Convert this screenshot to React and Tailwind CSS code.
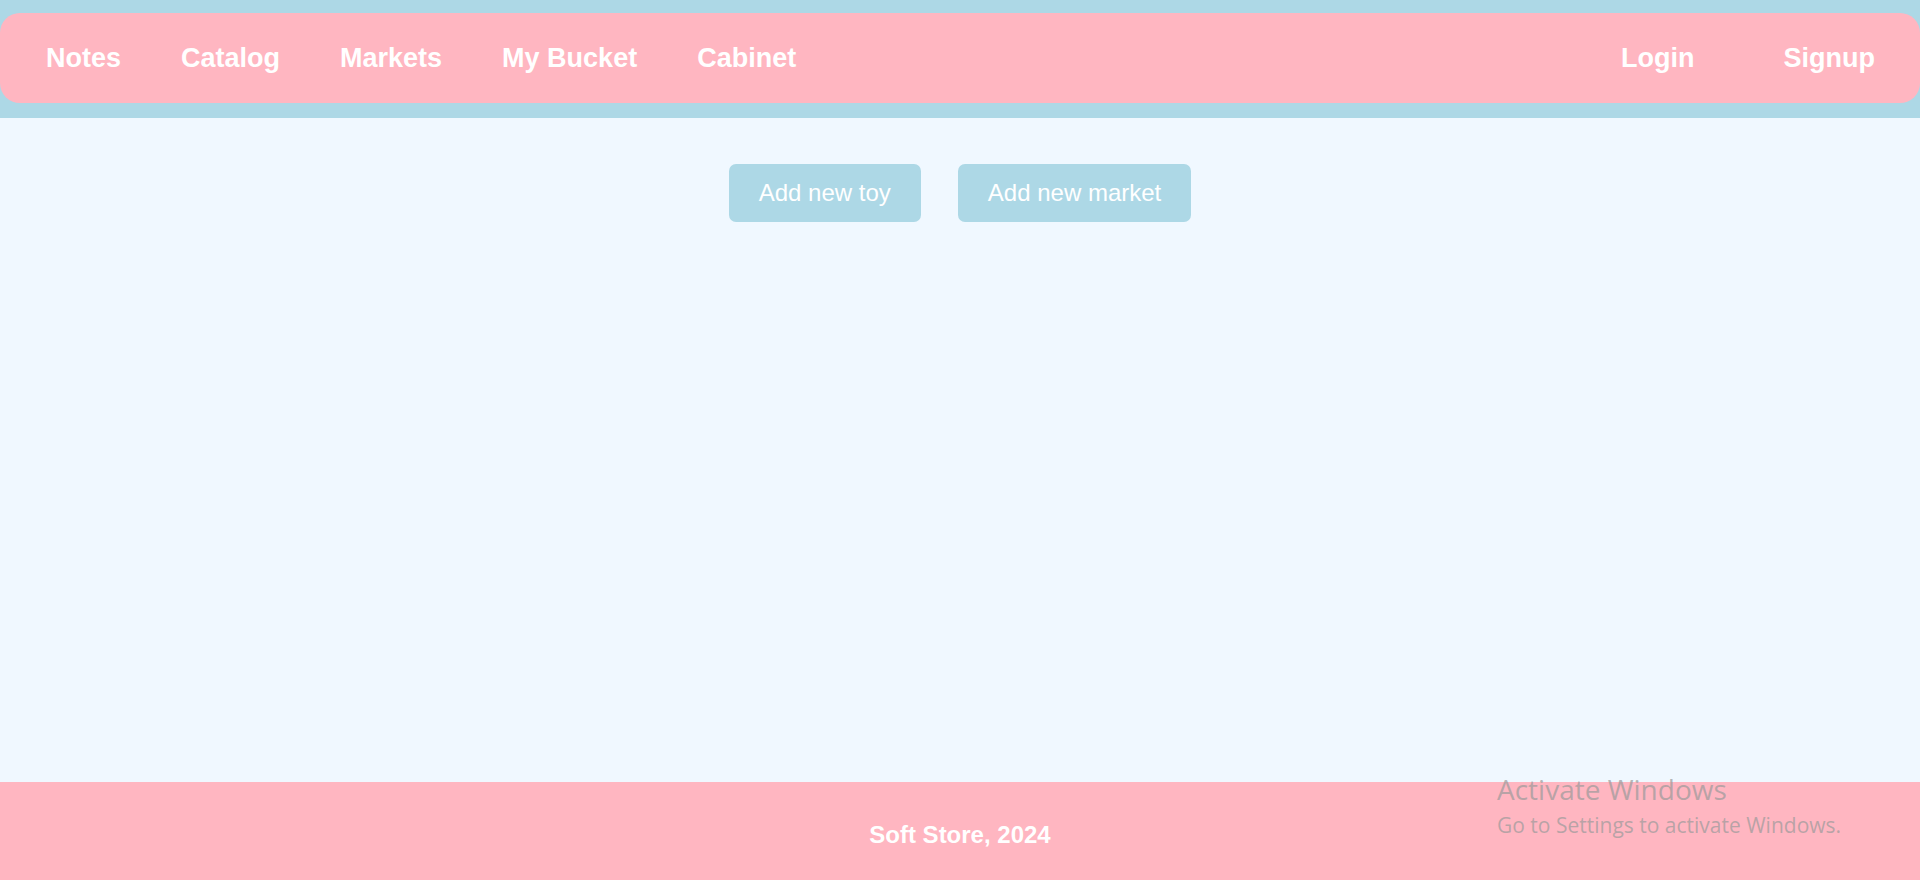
import React from 'react';

const leftLinks = ['Notes', 'Catalog', 'Markets', 'My Bucket', 'Cabinet'];
const rightLinks = ['Login', 'Signup'];

const App = () => {
  return (
    <div className="h-screen flex flex-col bg-[#F0F8FF] font-['Liberation_Sans',Arial,sans-serif] relative">
      <header className="bg-[#ADD8E6] pt-[13px] pb-[15px]">
        <nav className="bg-[#FFB6C1] rounded-[20px] h-[90px] flex items-center justify-between pl-[46px] pr-[45px]">
          <div className="flex items-center gap-[60px]">
            {leftLinks.map((l) => (
              <a key={l} className="text-white font-bold text-[27px] leading-none cursor-pointer">{l}</a>
            ))}
          </div>
          <div className="flex items-center gap-[89px]">
            {rightLinks.map((l) => (
              <a key={l} className="text-white font-bold text-[27px] leading-none cursor-pointer">{l}</a>
            ))}
          </div>
        </nav>
      </header>

      <main className="flex-1">
        <div className="flex justify-center gap-[37px] pt-[46px]">
          <button className="h-[58px] px-[30px] rounded-[7px] bg-[#ADD8E6] text-white text-[24px] flex items-center">
            Add new toy
          </button>
          <button className="h-[58px] px-[30px] rounded-[7px] bg-[#ADD8E6] text-white text-[24px] flex items-center">
            Add new market
          </button>
        </div>
      </main>

      <footer className="bg-[#FFB6C1] h-[98px] flex items-center justify-center pt-[8px]">
        <p className="text-white font-bold text-[24px] leading-none">Soft Store, 2024</p>
      </footer>

      {/* OS watermark overlay */}
      <div className="absolute left-[1497px] top-[772px] text-[#9a9a9a]/70 font-['Open_Sans',sans-serif] pointer-events-none">
        <div className="text-[28px] leading-[34px]">Activate Windows</div>
        <div className="text-[21px] leading-[26px] mt-[6px]">Go to Settings to activate Windows.</div>
      </div>
    </div>
  );
};

export default App;
